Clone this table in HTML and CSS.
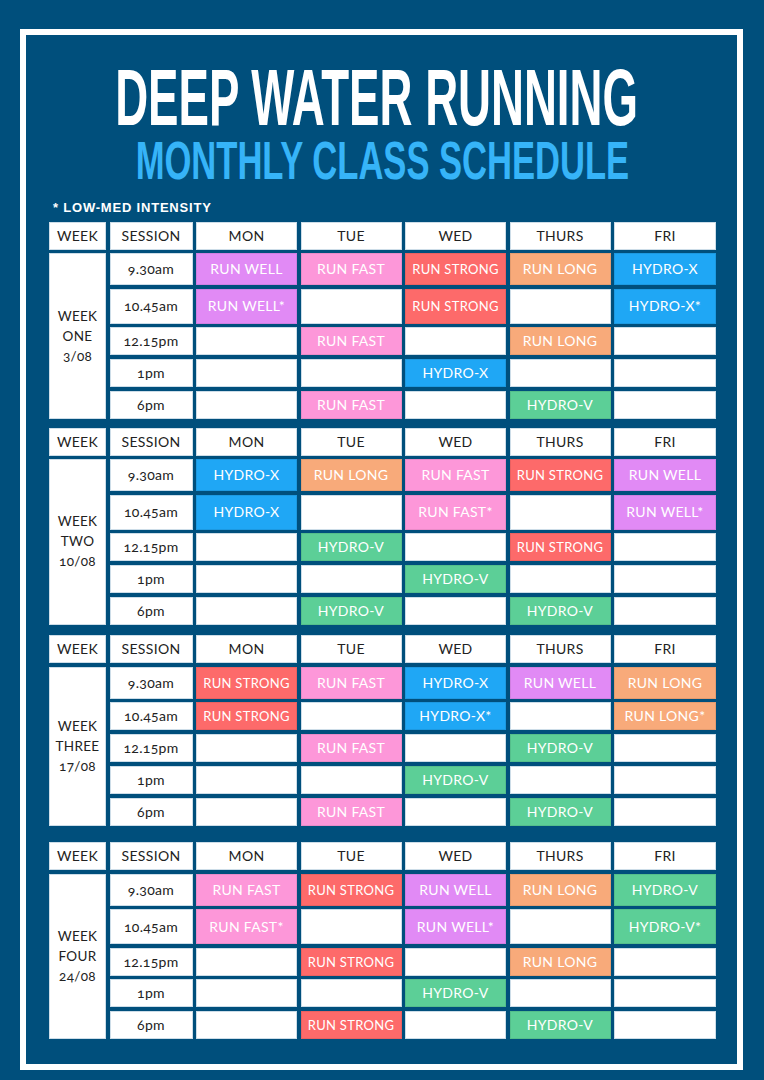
FILE: index.html
```html
<!DOCTYPE html>
<html lang="en">
<head>
<meta charset="utf-8">
<title>Deep Water Running – Monthly Class Schedule</title>
<link rel="stylesheet" href="styles.css">
</head>
<body>
<div class="frame">
  <h1 class="title"><span>DEEP WATER RUNNING</span></h1>
  <h2 class="subtitle"><span>MONTHLY CLASS SCHEDULE</span></h2>
  <p class="note">* LOW-MED INTENSITY</p>

  <div class="week w1">
    <div class="c">WEEK</div><div class="c">SESSION</div><div class="c">MON</div><div class="c">TUE</div><div class="c">WED</div><div class="c">THURS</div><div class="c">FRI</div>
    <div class="c wk">WEEK<br>ONE<br>3/08</div>
    <div class="c">9.30am</div><div class="c well">RUN WELL</div><div class="c fast">RUN FAST</div><div class="c strong">RUN STRONG</div><div class="c long">RUN LONG</div><div class="c hx">HYDRO-X</div>
    <div class="c">10.45am</div><div class="c well">RUN WELL*</div><div class="c"></div><div class="c strong">RUN STRONG</div><div class="c"></div><div class="c hx">HYDRO-X*</div>
    <div class="c">12.15pm</div><div class="c"></div><div class="c fast">RUN FAST</div><div class="c"></div><div class="c long">RUN LONG</div><div class="c"></div>
    <div class="c">1pm</div><div class="c"></div><div class="c"></div><div class="c hx">HYDRO-X</div><div class="c"></div><div class="c"></div>
    <div class="c">6pm</div><div class="c"></div><div class="c fast">RUN FAST</div><div class="c"></div><div class="c hv">HYDRO-V</div><div class="c"></div>
  </div>

  <div class="week w2">
    <div class="c">WEEK</div><div class="c">SESSION</div><div class="c">MON</div><div class="c">TUE</div><div class="c">WED</div><div class="c">THURS</div><div class="c">FRI</div>
    <div class="c wk">WEEK<br>TWO<br>10/08</div>
    <div class="c">9.30am</div><div class="c hx">HYDRO-X</div><div class="c long">RUN LONG</div><div class="c fast">RUN FAST</div><div class="c strong">RUN STRONG</div><div class="c well">RUN WELL</div>
    <div class="c">10.45am</div><div class="c hx">HYDRO-X</div><div class="c"></div><div class="c fast">RUN FAST*</div><div class="c"></div><div class="c well">RUN WELL*</div>
    <div class="c">12.15pm</div><div class="c"></div><div class="c hv">HYDRO-V</div><div class="c"></div><div class="c strong">RUN STRONG</div><div class="c"></div>
    <div class="c">1pm</div><div class="c"></div><div class="c"></div><div class="c hv">HYDRO-V</div><div class="c"></div><div class="c"></div>
    <div class="c">6pm</div><div class="c"></div><div class="c hv">HYDRO-V</div><div class="c"></div><div class="c hv">HYDRO-V</div><div class="c"></div>
  </div>

  <div class="week w3">
    <div class="c">WEEK</div><div class="c">SESSION</div><div class="c">MON</div><div class="c">TUE</div><div class="c">WED</div><div class="c">THURS</div><div class="c">FRI</div>
    <div class="c wk">WEEK<br>THREE<br>17/08</div>
    <div class="c">9.30am</div><div class="c strong">RUN STRONG</div><div class="c fast">RUN FAST</div><div class="c hx">HYDRO-X</div><div class="c well">RUN WELL</div><div class="c long">RUN LONG</div>
    <div class="c">10.45am</div><div class="c strong">RUN STRONG</div><div class="c"></div><div class="c hx">HYDRO-X*</div><div class="c"></div><div class="c long">RUN LONG*</div>
    <div class="c">12.15pm</div><div class="c"></div><div class="c fast">RUN FAST</div><div class="c"></div><div class="c hv">HYDRO-V</div><div class="c"></div>
    <div class="c">1pm</div><div class="c"></div><div class="c"></div><div class="c hv">HYDRO-V</div><div class="c"></div><div class="c"></div>
    <div class="c">6pm</div><div class="c"></div><div class="c fast">RUN FAST</div><div class="c"></div><div class="c hv">HYDRO-V</div><div class="c"></div>
  </div>

  <div class="week w4">
    <div class="c">WEEK</div><div class="c">SESSION</div><div class="c">MON</div><div class="c">TUE</div><div class="c">WED</div><div class="c">THURS</div><div class="c">FRI</div>
    <div class="c wk">WEEK<br>FOUR<br>24/08</div>
    <div class="c">9.30am</div><div class="c fast">RUN FAST</div><div class="c strong">RUN STRONG</div><div class="c well">RUN WELL</div><div class="c long">RUN LONG</div><div class="c hv">HYDRO-V</div>
    <div class="c">10.45am</div><div class="c fast">RUN FAST*</div><div class="c"></div><div class="c well">RUN WELL*</div><div class="c"></div><div class="c hv">HYDRO-V*</div>
    <div class="c">12.15pm</div><div class="c"></div><div class="c strong">RUN STRONG</div><div class="c"></div><div class="c long">RUN LONG</div><div class="c"></div>
    <div class="c">1pm</div><div class="c"></div><div class="c"></div><div class="c hv">HYDRO-V</div><div class="c"></div><div class="c"></div>
    <div class="c">6pm</div><div class="c"></div><div class="c strong">RUN STRONG</div><div class="c"></div><div class="c hv">HYDRO-V</div><div class="c"></div>
  </div>
</div>
</body>
</html>
```
FILE: styles.css
```css
html, body {
  margin: 0;
  padding: 0;
}
body {
  background: #004f7c;
  width: 764px;
  height: 1080px;
  overflow: hidden;
}
.frame {
  box-sizing: border-box;
  margin: 29px 0 0 20px;
  width: 723px;
  height: 1041px;
  border: 6px solid #ffffff;
  padding: 25.3px 21px 0 23px;
  display: flex;
  flex-direction: column;
}
.title, .subtitle {
  margin: 0;
  display: flex;
  justify-content: center;
  white-space: nowrap;
  font-family: "Liberation Sans", Arial, sans-serif;
  font-weight: 700;
}
.title {
  height: 76px;
  line-height: 76px;
  font-size: 80px;
  color: #ffffff;
  padding-right: 12px;
}
.title span {
  display: inline-block;
  transform: scaleX(0.57);
}
.subtitle {
  height: 50px;
  line-height: 50px;
  font-size: 53px;
  color: #36b4f8;
}
.subtitle span {
  display: inline-block;
  transform: scaleX(0.652);
}
.note {
  margin: 13.6px 0 5.8px 4px;
  font: 700 13px/16px "Liberation Sans", Arial, sans-serif;
  letter-spacing: 0.8px;
  color: #ffffff;
}
.week {
  display: grid;
  grid-template-columns: 57px 83px 101px 101px 101px 101px 102px;
  grid-template-rows: 28px 32px 34.5px 28px 28px 28px;
  column-gap: 3.5px;
  row-gap: 3.7px;
}
.w1 { margin-bottom: 9px; }
.w2 { margin-bottom: 10.5px; }
.w3 {
  margin-bottom: 16.5px;
  grid-template-rows: 28px 32px 28px 28px 28px 28px;
}
.c {
  background: #ffffff;
  display: flex;
  align-items: center;
  justify-content: center;
  text-align: center;
  font-family: "Lato", "Open Sans", sans-serif;
  font-size: 14px;
  letter-spacing: 0.3px;
  color: #222222;
  font-variant-numeric: oldstyle-nums;
  box-shadow: inset 0 0 0 1px #cddde8;
  padding-bottom: 1px;
  box-sizing: border-box;
}
.wk {
  grid-column: 1;
  grid-row: 2 / 7;
  line-height: 20px;
  font-size: 13.5px;
}
.well, .fast, .strong, .long, .hx, .hv {
  color: #ffffff;
  box-shadow: inset 0 0 0 1px rgba(0, 0, 0, 0.08);
}
.well { background: #e18af5; }
.fast { background: #fd97d9; }
.strong { background: #fd6a6a; font-size: 13px; padding-bottom: 0; }
.long { background: #f8aa7a; }
.hx { background: #1fa7f5; }
.hv { background: #5ccf97; }
```
